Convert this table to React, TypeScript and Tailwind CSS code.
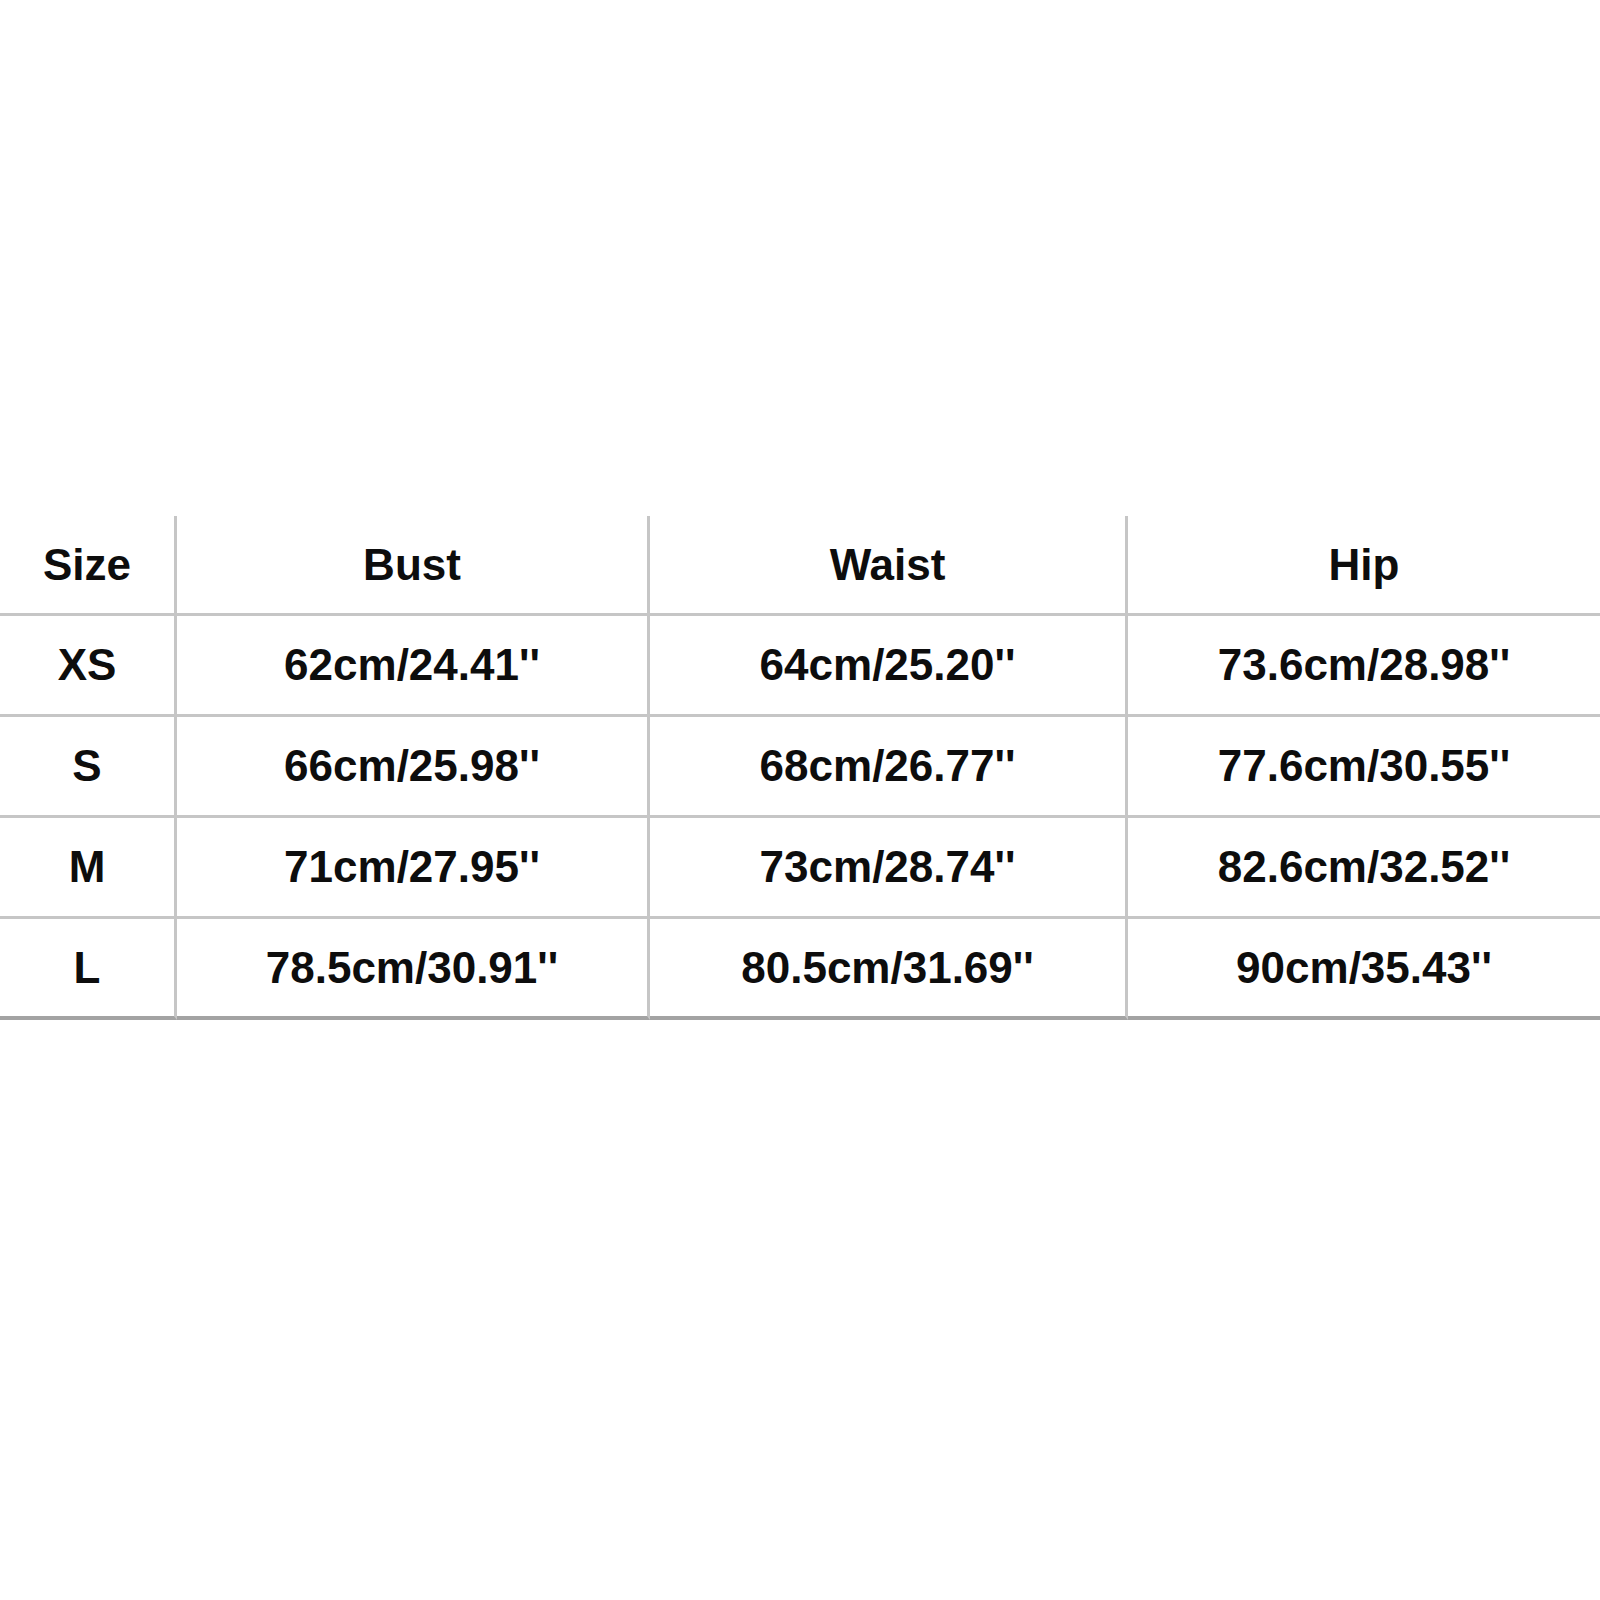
const head = ['Size', 'Bust', 'Waist', 'Hip']

const rows = [
  ['XS', '62cm/24.41\'\'', '64cm/25.20\'\'', '73.6cm/28.98\'\''],
  ['S', '66cm/25.98\'\'', '68cm/26.77\'\'', '77.6cm/30.55\'\''],
  ['M', '71cm/27.95\'\'', '73cm/28.74\'\'', '82.6cm/32.52\'\''],
  ['L', '78.5cm/30.91\'\'', '80.5cm/31.69\'\'', '90cm/35.43\'\''],
]

const Cell = ({ text, col, last, header }: { text: string; col: number; last: boolean; header?: boolean }) => (
  <div
    className={`flex items-center justify-center ${header ? 'h-[100px]' : 'h-[101px]'} ${
      col < 3 ? 'border-r-[3px] border-r-[#c6c6c6]' : ''
    } ${last ? 'border-b-[4px] border-b-[#a3a3a3]' : 'border-b-[3px] border-b-[#c6c6c6]'}`}
  >
    <span className="text-[44px] font-bold leading-none text-[#0d0d0d]">{text}</span>
  </div>
)

export default function App() {
  return (
    <div className="w-[1600px] h-[1600px] bg-white pt-[516px]" style={{ fontFamily: '"Liberation Sans", Arial, sans-serif' }}>
      <div className="grid grid-cols-[177px_473px_478px_1fr]">
        {head.map((h, i) => (
          <Cell key={h} text={h} col={i} last={false} header />
        ))}
        {rows.map((r, ri) =>
          r.map((t, ci) => <Cell key={`${ri}-${ci}`} text={t} col={ci} last={ri === rows.length - 1} />)
        )}
      </div>
    </div>
  )
}
